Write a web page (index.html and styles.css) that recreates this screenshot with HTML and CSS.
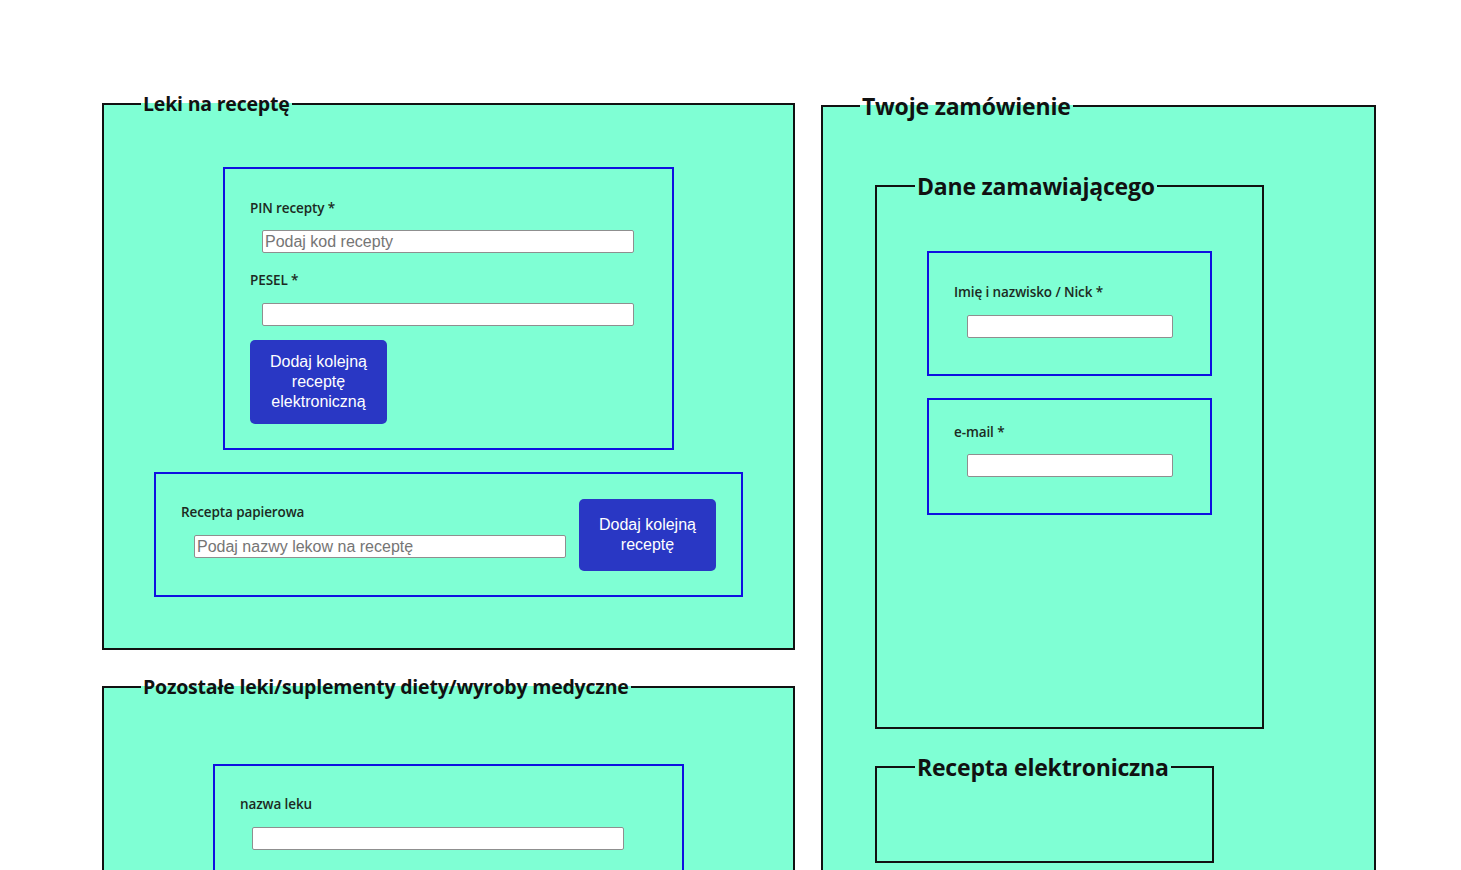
FILE: index.html
```html
<!DOCTYPE html>
<html lang="pl">
<head>
<meta charset="utf-8">
<title>Zamówienie</title>
<link rel="stylesheet" href="styles.css">
</head>
<body>
<div class="page">
  <div class="col-left">
    <fieldset class="fs fs-rx">
      <legend class="lg-small">Leki na receptę</legend>
      <div class="box box-pin">
        <label class="lbl" for="pin">PIN recepty *</label>
        <input class="inp inp-wide" id="pin" type="text" placeholder="Podaj kod recepty">
        <label class="lbl lbl-second" for="pesel">PESEL *</label>
        <input class="inp inp-wide" id="pesel" type="text">
        <button class="btn btn-e" type="button">Dodaj kolejną receptę elektroniczną</button>
      </div>
      <div class="box box-paper">
        <div class="paper-group">
          <label class="lbl" for="paper">Recepta papierowa</label>
          <input class="inp inp-wide" id="paper" type="text" placeholder="Podaj nazwy lekow na receptę">
        </div>
        <button class="btn btn-p" type="button">Dodaj kolejną receptę</button>
      </div>
    </fieldset>
    <fieldset class="fs fs-other">
      <legend class="lg-small">Pozostałe leki/suplementy diety/wyroby medyczne</legend>
      <div class="box box-drug">
        <label class="lbl" for="drug">nazwa leku</label>
        <input class="inp inp-wide" id="drug" type="text">
      </div>
    </fieldset>
  </div>
  <div class="col-right">
    <fieldset class="fs fs-order">
      <legend class="lg-big">Twoje zamówienie</legend>
      <fieldset class="fs fs-buyer">
        <legend class="lg-big">Dane zamawiającego</legend>
        <div class="box box-name">
          <label class="lbl" for="name">Imię i nazwisko / Nick *</label>
          <input class="inp inp-narrow" id="name" type="text">
        </div>
        <div class="box box-mail">
          <label class="lbl" for="mail">e-mail *</label>
          <input class="inp inp-narrow" id="mail" type="text">
        </div>
      </fieldset>
      <fieldset class="fs fs-erx">
        <legend class="lg-big">Recepta elektroniczna</legend>
      </fieldset>
    </fieldset>
  </div>
</div>
</body>
</html>
```
FILE: styles.css
```css
* { box-sizing: border-box; }
html, body { margin: 0; padding: 0; background: #ffffff; }
body { font-family: "Open Sans", "Noto Sans", sans-serif; color: #1c1c1c; }

.page {
  display: flex;
  align-items: flex-start;
  gap: 26px;
  padding: 92px 0 0 102px;
}
.col-left { width: 693px; display: flex; flex-direction: column; }
.col-right { width: 555px; }

.fs {
  margin: 0;
  padding: 0;
  border: 2px solid #111;
  background: #7fffd4;
  min-width: 0;
}
.fs legend {
  margin-left: 37px;
  padding: 0 2px;
  font-weight: 700;
  color: #111;
}
.lg-small { font-size: 19.5px; line-height: 23px; letter-spacing: -0.2px; }
.lg-big { font-size: 23px; line-height: 28px; letter-spacing: -0.2px; }

.fs-rx { padding-bottom: 51px; }
.fs-other { margin-top: 25px; padding-bottom: 60px; }

.fs-order { padding: 52px 0 60px 0; }
.fs-buyer { width: 389px; margin-left: 52px; padding-bottom: 212px; }
.fs-erx { width: 339px; height: 110px; margin-top: 24px; margin-left: 52px; }
.fs-buyer legend, .fs-erx legend { margin-left: 38px; }

.box {
  border: 2px solid #1010e0;
  margin: 0 auto;
  padding: 0 25px;
}
.lbl {
  display: block;
  font-size: 13.5px;
  line-height: 18px;
  font-weight: 600;
  color: #1c2a22;
  letter-spacing: -0.1px;
}
.inp {
  display: block;
  height: 23px;
  margin-left: 12px;
  padding: 1px 2px;
  border: 1px solid #8f8f8f;
  border-radius: 2px;
  background: #fff;
  font-family: "Liberation Sans", Arial, sans-serif;
  font-size: 16px;
  color: #000;
}
.inp::placeholder { color: #757575; }
.inp-wide { width: 372px; }
.inp-narrow { width: 206px; margin-left: 13px; }

.btn {
  display: block;
  width: 137px;
  border: none;
  border-radius: 5px;
  background: #2937c4;
  color: #fff;
  font-family: "Liberation Sans", Arial, sans-serif;
  font-size: 16px;
  line-height: 20px;
  padding: 0 6px;
  text-align: center;
}

.box-pin { width: 451px; margin-top: 52px; padding-top: 30px; padding-bottom: 24px; }
.box-pin .inp { margin-top: 13px; }
.box-pin .lbl-second { margin-top: 18px; }
.box-pin .inp + .lbl-second + .inp { margin-top: 14px; }
.box-pin .btn { margin-top: 14px; height: 84px; }

.box-paper {
  width: 589px;
  height: 125px;
  margin-top: 22px;
  display: flex;
  align-items: flex-start;
}
.paper-group { padding-top: 29px; }
.paper-group .inp { margin-left: 13px; margin-top: 14px; }
.btn-p { margin-left: 13px; margin-top: 25px; height: 72px; }

.box-drug { width: 471px; margin-top: 66px; padding-top: 29px; padding-bottom: 40px; }
.box-drug .inp { margin-top: 14px; }

.box-name { width: 285px; height: 125px; margin-top: 51px; padding-top: 30px; }
.box-name .inp { margin-top: 14px; }
.box-mail { width: 285px; height: 117px; margin-top: 22px; padding-top: 23px; }
.box-mail .inp { margin-top: 13px; }
```
